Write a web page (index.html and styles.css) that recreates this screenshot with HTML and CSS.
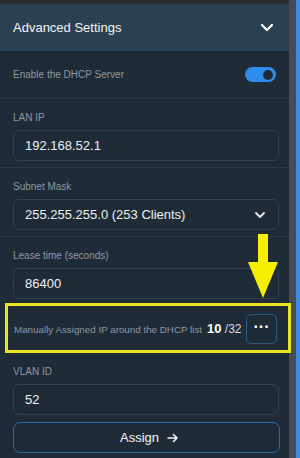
FILE: index.html
```html
<!DOCTYPE html>
<html lang="en">
  <head>
    <meta charset="UTF-8" />
    <meta name="viewport" content="width=device-width, initial-scale=1.0" />
    <title>Advanced Settings</title>
    <link rel="stylesheet" href="styles.css">
  </head>
  <body>
    <div class="screen">
      <main class="panel">
        <div class="topbar"></div>
        <div class="header">
          <span>Advanced Settings</span>
          <svg class="chev" width="14" height="9" viewBox="0 0 14 9">
            <path d="M2 2l5 5 5-5" fill="none" stroke="#fff" stroke-width="2.2" stroke-linecap="round" stroke-linejoin="round" />
          </svg>
        </div>
        <div class="row toggle-row">
          <span class="label">Enable the DHCP Server</span>
          <div class="toggle"><div class="knob"></div></div>
        </div>
        <div class="field sep">
          <label class="label">LAN IP</label>
          <div class="input">192.168.52.1</div>
        </div>
        <div class="field sep">
          <label class="label">Subnet Mask</label>
          <div class="input select">
            <span>255.255.255.0 (253 Clients)</span>
            <svg width="12" height="8" viewBox="0 0 12 8">
              <path d="M2 2l4 4 4-4" fill="none" stroke="#e8ecef" stroke-width="1.8" stroke-linecap="round" stroke-linejoin="round" />
            </svg>
          </div>
        </div>
        <div class="field">
          <label class="label">Lease time (seconds)</label>
          <div class="input">86400</div>
        </div>
        <div class="row assigned">
          <span class="label">Manually Assigned IP around the DHCP list</span>
          <span class="count"><b>10</b> /32</span>
          <button class="more">&middot;&middot;&middot;</button>
        </div>
        <div class="field">
          <label class="label">VLAN ID</label>
          <div class="input">52</div>
        </div>
        <button class="assign">
          <span>Assign</span>
          <svg width="12" height="10" viewBox="0 0 12 10">
            <path d="M1 5h9M6.5 1.5L10 5l-3.5 3.5" fill="none" stroke="#f2f4f6" stroke-width="1.6" stroke-linecap="round" stroke-linejoin="round" />
          </svg>
        </button>
        <svg class="pointer" width="32" height="66" viewBox="0 0 32 66">
          <path d="M11 0h10v28h10L16 64 1 28h10z" fill="#f7ef00" />
        </svg>
      </main>
      <div class="scroll"></div>
      <div class="edge"></div>
    </div>
  </body>
</html>
```
FILE: styles.css
```css
body {
  margin: 0;
  background-color: #1f2b36;
  font-family: "Liberation Sans", Arial, sans-serif;
}
.screen {
  display: flex;
  height: 458px;
  overflow: hidden;
}
.panel {
  width: 289px;
  background-color: #1f2b36;
  position: relative;
}
.scroll {
  width: 7px;
  background-color: #474c52;
}
.edge {
  width: 4px;
  background-color: #3b8ae6;
}
.topbar {
  height: 4px;
  background-color: #2a2f34;
}
.header {
  height: 47px;
  background-color: #2b4153;
  display: flex;
  justify-content: space-between;
  align-items: center;
  padding: 0 15px 0 13px;
  color: #f2f4f6;
  font-size: 13px;
}
.label {
  display: block;
  color: #8d99a5;
  font-size: 10px;
}
.row {
  display: flex;
  align-items: center;
  padding: 0 13px;
}
.toggle-row {
  height: 47px;
  justify-content: space-between;
  border-bottom: 1px solid #2c3945;
}
.toggle {
  width: 31px;
  height: 15px;
  border-radius: 8px;
  background-color: #2d8cec;
  display: flex;
  justify-content: flex-end;
  align-items: center;
  padding: 0 3px;
  box-sizing: border-box;
}
.knob {
  width: 10px;
  height: 10px;
  border-radius: 50%;
  background-color: #1f2b36;
}
.field {
  padding: 13px 10px 0 13px;
}
.field .label {
  margin-bottom: 7px;
}
.sep {
  padding-bottom: 6px;
  border-bottom: 1px solid #2c3945;
}
.input {
  height: 31px;
  box-sizing: border-box;
  border: 1px solid #34414d;
  border-radius: 6px;
  display: flex;
  align-items: center;
  justify-content: space-between;
  padding: 0 12px 0 11px;
  color: #eef1f4;
  font-size: 13px;
}
.assigned {
  margin: 4px 0 0 5px;
  width: 286px;
  height: 50px;
  box-sizing: border-box;
  border: 3px solid #ebe51c;
  padding: 0 11px 0 6px;
}
.assigned .label {
  font-size: 9.8px;
  margin-top: 2px;
}
.count {
  color: #d6dce2;
  font-size: 12px;
  margin-left: 5px;
  margin-top: 1px;
}
.count b {
  color: #fff;
  font-size: 13px;
  font-weight: bold;
}
.more {
  margin-left: auto;
  margin-top: 1px;
  width: 31px;
  height: 30px;
  border: 1px solid #2c5a80;
  border-radius: 5px;
  background: none;
  color: #fff;
  font-size: 16px;
  font-weight: bold;
  padding: 0 0 4px;
  font-family: "Liberation Sans", Arial, sans-serif;
}
.assign {
  display: flex;
  justify-content: center;
  align-items: center;
  gap: 8px;
  margin: 7px 0 0 13px;
  width: 267px;
  height: 31px;
  border: 1px solid #2d6aa1;
  border-radius: 7px;
  background: none;
  color: #f2f4f6;
  font-size: 13px;
  font-family: "Liberation Sans", Arial, sans-serif;
  padding: 0 0 0 6px;
}
.pointer {
  position: absolute;
  left: 247px;
  top: 234px;
}
```
